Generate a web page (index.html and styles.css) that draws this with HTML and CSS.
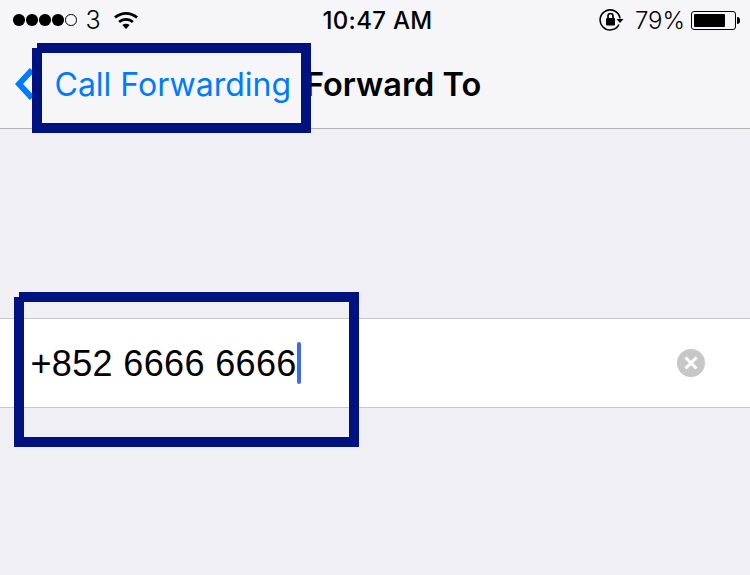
FILE: index.html
```html
<!DOCTYPE html>
<html>
<head>
    <title>Forward To</title>
    <link rel="stylesheet" href="styles.css">
</head>
<body>
    <div class="status-bar">
        <div class="status-left">
            <div class="signal">
                <span class="dot"></span>
                <span class="dot"></span>
                <span class="dot"></span>
                <span class="dot"></span>
                <span class="dot empty"></span>
            </div>
            <span class="carrier">3</span>
            <svg class="wifi" width="26" height="20" viewBox="0 0 26 20">
                <path d="M1 6.600C8 .4 18 .4 25 6.600l-1.900 2C17.200 3.500 8.800 3.500 2.900 8.600z"/>
                <path d="M5.200 10.900c4.700-4 10.900-4 15.600 0l-1.900 2c-3.600-2.900-8.200-2.900-11.800 0z"/>
                <path d="M9.300 15.100c2.300-1.700 5.100-1.700 7.400 0L13 19z"/>
            </svg>
        </div>
        <div class="clock">10:47 AM</div>
        <div class="status-right">
            <svg class="rotation" width="25" height="24" viewBox="0 0 25 24">
                <path class="ring" d="M20 16.500A10 10 0 1 1 21 10.500"/>
                <path d="M17.500 11h7l-3.500 4z"/>
                <rect x="7" y="10" width="9" height="7.500" rx="1"/>
                <path class="shackle" d="M9 10.500V8a2.500 2.500 0 0 1 5 0v2.500"/>
            </svg>
            <span class="battery-text">79%</span>
            <div class="battery">
                <div class="battery-level" style="width: 79%"></div>
            </div>
            <span class="battery-tip"></span>
        </div>
    </div>

    <div class="nav-bar">
        <svg class="back-arrow" width="20" height="32" viewBox="0 0 20 32">
            <path d="M17 2 L4 16 L17 30"/>
        </svg>
        <a class="back-link">Call Forwarding</a>
        <h1 class="nav-title">Forward To</h1>
    </div>

    <div class="phone-row">
        <span class="phone-number">+852 6666 6666</span>
        <span class="cursor"></span>
        <svg class="clear-button" width="28" height="28" viewBox="0 0 28 28">
            <circle cx="14" cy="14" r="14"/>
            <path d="M8.500 8.500 L19.500 19.500 M19.500 8.500 L8.500 19.500"/>
        </svg>
    </div>

    <div class="mark mark-back"></div>
    <div class="mark mark-phone"></div>
</body>
</html>
```

FILE: styles.css
```css
body {
    margin: 0;
    height: 575px;
    overflow: hidden;
    background: #efeff4;
    font-family: "Inter", "Liberation Sans", sans-serif;
    color: #000;
}
.status-bar {
    display: grid;
    grid-template-columns: 1fr auto 1fr;
    align-items: center;
    height: 40px;
    padding: 0 10px 0 13px;
    background: #f6f6f9;
}
.status-left,
.status-right {
    display: flex;
    align-items: center;
}
.status-right {
    justify-content: flex-end;
}
.signal {
    display: flex;
    gap: 1.500px;
}
.dot {
    width: 11.500px;
    height: 11.500px;
    border-radius: 50%;
    background: #000;
    box-sizing: border-box;
}
.dot.empty {
    background: none;
    border: 1px solid #000;
}
.carrier {
    margin-left: 9px;
    font-size: 25px;
    font-weight: 300;
}
.wifi {
    margin-left: 12px;
}
.clock {
    margin-left: 2px;
    font-size: 24px;
    font-weight: 500;
    letter-spacing: 0.300px;
}
.rotation {
    margin-right: 11px;
}
.rotation .ring {
    fill: none;
    stroke: #000;
    stroke-width: 1.600;
}
.rotation .shackle {
    fill: none;
    stroke: #000;
    stroke-width: 1.700;
}
.battery-text {
    font-size: 24px;
    font-weight: 300;
    margin-right: 6px;
}
.battery {
    width: 45px;
    height: 19px;
    box-sizing: border-box;
    padding: 2px;
    border: 1px solid #000;
    border-radius: 3px;
}
.battery-level {
    height: 100%;
    background: #000;
    border-radius: 1px;
}
.battery-tip {
    width: 3px;
    height: 7px;
    margin-left: 1px;
    background: #000;
    border-radius: 0 3px 3px 0;
}
.nav-bar {
    display: flex;
    align-items: center;
    height: 88px;
    padding-left: 15px;
    background: #f6f6f9;
    border-bottom: 1px solid #b2b2b2;
}
.back-arrow {
    fill: none;
    stroke: #007aff;
    stroke-width: 6px;
}
.back-link {
    margin-left: 19.500px;
    font-size: 32px;
    color: #007aff;
}
.nav-title {
    margin: 0 0 0 14px;
    font-size: 32.500px;
    font-weight: 600;
}
.phone-row {
    display: flex;
    align-items: center;
    height: 88px;
    margin-top: 189px;
    padding: 0 45px 0 30.500px;
    background: #fff;
    border-top: 1px solid #c8c7cc;
    border-bottom: 1px solid #c8c7cc;
}
.phone-number {
    font-family: "Liberation Sans", sans-serif;
    font-size: 36px;
    letter-spacing: 0.350px;
    padding-top: 2px;
}
.cursor {
    width: 4px;
    height: 42px;
    background: #4169e8;
    border-radius: 2px;
}
.clear-button {
    margin-left: auto;
}
.clear-button circle {
    fill: #c7c7c7;
}
.clear-button path {
    stroke: #fff;
    stroke-width: 3px;
}
.mark {
    position: absolute;
    box-sizing: border-box;
    border: 10px solid #00127f;
    clip-path: polygon(5px 0, 100% 0, 100% 100%, 0 100%, 0 5px, 5px 5px);
}
.mark-back {
    left: 32px;
    top: 43px;
    width: 279px;
    height: 90px;
}
.mark-phone {
    left: 14px;
    top: 292px;
    width: 345px;
    height: 155px;
}
```
